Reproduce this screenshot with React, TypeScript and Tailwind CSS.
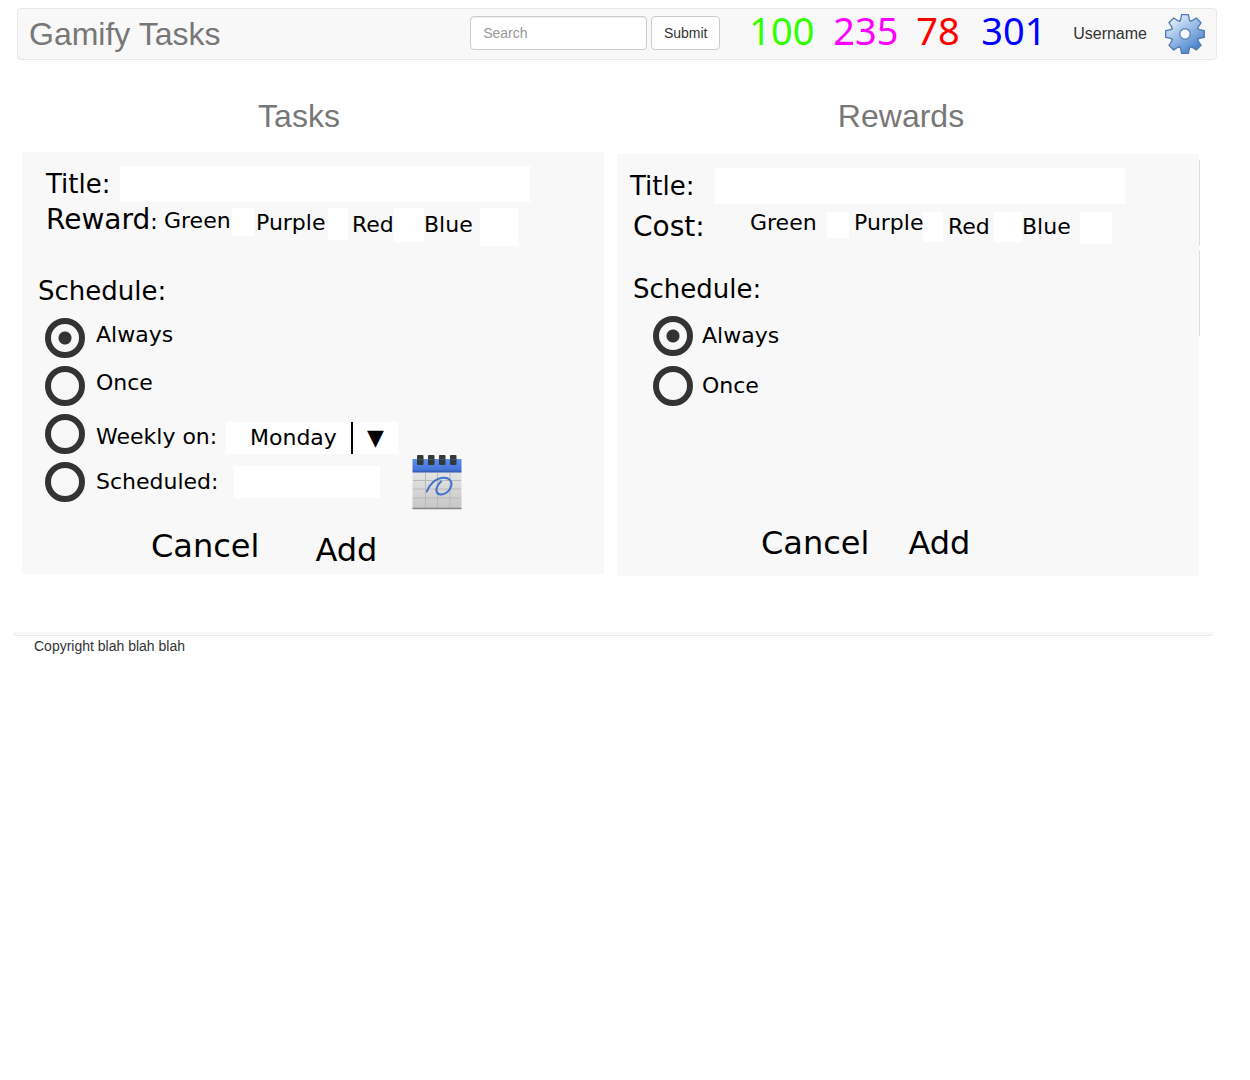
import React from "react";

const SCORES = [
  { name: "Green points", value: 100, style: "w-[84px] text-[#33ff00]" },
  { name: "Purple points", value: 235, style: "w-[83px] text-[#ff00ff]" },
  { name: "Red points", value: 78, style: "w-[65px] text-[#ff0000]" },
  { name: "Blue points", value: 301, style: "w-[92px] text-[#0000ff]" },
];

const TASK_COLORS = [
  { name: "Green", label: "w-[68px] leading-[26px]", box: "w-[22px] h-7 mr-0.5" },
  { name: "Purple", label: "w-[72px] leading-[30px]", box: "w-5 h-8 mr-1" },
  { name: "Red", label: "w-[42px] leading-[34px]", box: "w-[30px] h-[34px]" },
  { name: "Blue", label: "w-14 leading-[34px]", box: "w-[38px] h-[38px]" },
];

const REWARD_COLORS = [
  { name: "Green", label: "w-[77px] leading-[22px]", box: "w-[22px] h-[26px] mr-[5px]" },
  { name: "Purple", label: "w-[69px] leading-[22px]", box: "w-5 h-[30px] mr-[5px]" },
  { name: "Red", label: "w-[46px] leading-[30px]", box: "w-7 h-[30px]" },
  { name: "Blue", label: "w-[58px] leading-[30px]", box: "w-8 h-8" },
];

const DAYS = ["Monday", "Tuesday", "Wednesday", "Thursday", "Friday", "Saturday", "Sunday"];

// Outline of an eight-toothed gear centred on (20, 20).
const GEAR_POINTS = Array.from({ length: 8 }, (_, i) => {
  const a = (i * Math.PI) / 4;
  const corners = [
    [-5.4, 12.6],
    [-4.4, 14.4],
    [-3.4, 19.3],
    [3.4, 19.3],
    [4.4, 14.4],
    [5.4, 12.6],
  ];
  return corners
    .map(([x, y]) => {
      const px = 20 + x * Math.cos(a) + y * Math.sin(a);
      const py = 20 + x * Math.sin(a) - y * Math.cos(a);
      return `${px.toFixed(2)},${py.toFixed(2)}`;
    })
    .join(" ");
}).join(" ");

function GearIcon() {
  return (
    <svg viewBox="0 0 40 40" className="size-10" aria-hidden="true">
      <defs>
        <linearGradient id="gear" x1="0.15" y1="0.1" x2="0.75" y2="0.95">
          <stop offset="0" stopColor="#e3eefa" />
          <stop offset="0.5" stopColor="#94b8e4" />
          <stop offset="1" stopColor="#4580cd" />
        </linearGradient>
      </defs>
      <polygon points={GEAR_POINTS} fill="url(#gear)" stroke="#4f79b0" strokeWidth="1.3" strokeLinejoin="round" />
      <circle cx="20" cy="20" r="5.2" fill="#f8f8f8" stroke="#6088bd" strokeWidth="1.4" />
    </svg>
  );
}

function CalendarIcon() {
  return (
    <svg viewBox="0 0 50 55" className="h-[55px] w-[50px]" aria-hidden="true">
      <defs>
        <linearGradient id="calHead" x1="0" y1="0" x2="0" y2="1">
          <stop offset="0" stopColor="#5b8df0" />
          <stop offset="0.8" stopColor="#4474d6" />
          <stop offset="1" stopColor="#2f55a6" />
        </linearGradient>
        <linearGradient id="calBody" x1="0" y1="0" x2="0" y2="1">
          <stop offset="0" stopColor="#e6e6e6" />
          <stop offset="1" stopColor="#c6c6c6" />
        </linearGradient>
      </defs>
      <rect x="0.5" y="16" width="49" height="38" fill="url(#calBody)" />
      <path d="M13.5 18V53M25.5 18V53M38 18V53M1 25.5H49M1 34H49M1 43H49" stroke="#bababa" strokeWidth="1" fill="none" />
      <path d="M0.5 53.5H49.5" stroke="#858585" strokeWidth="1.6" />
      <rect x="0.5" y="4" width="49" height="13.5" fill="url(#calHead)" />
      <g fill="#333a3a">
        <rect x="5" y="0" width="6.5" height="10" rx="1" />
        <rect x="16" y="0" width="6.5" height="10" rx="1" />
        <rect x="27" y="0" width="6.5" height="10" rx="1" />
        <rect x="38" y="0" width="6.5" height="10" rx="1" />
      </g>
      <path d="M5 4.5h6.5M16 4.5H22.5M27 4.5h6.5M38 4.5h6.5" stroke="#4c5252" strokeWidth="1" />
      <path
        d="M14.8 36.5C17 30 23 23.5 31 22.8C37 22.4 40.5 26 39.2 31C38 36 33 40 28.5 39.5C24 39 23.5 34.5 25.5 31C26.5 29 28 27.5 29 26.5"
        fill="none"
        stroke="#4272cc"
        strokeWidth="2"
        strokeLinecap="round"
      />
    </svg>
  );
}

type ColorField = { name: string; label: string; box: string };

function ColorFields({ prefix, fields }: { prefix: string; fields: ColorField[] }) {
  return (
    <>
      {fields.map((f) => (
        <React.Fragment key={f.name}>
          <label htmlFor={`${prefix}-${f.name}`} className={`shrink-0 text-[22px] ${f.label}`}>
            {f.name}
          </label>
          <input id={`${prefix}-${f.name}`} type="text" className={`shrink-0 bg-white ${f.box}`} />
        </React.Fragment>
      ))}
    </>
  );
}

function Radio({ id, name, checked }: { id: string; name: string; checked?: boolean }) {
  return (
    <input
      type="radio"
      id={id}
      name={name}
      defaultChecked={checked}
      className="size-10 shrink-0 appearance-none rounded-full border-6 border-[#333] checked:bg-[radial-gradient(circle,#333_6px,transparent_7px)]"
    />
  );
}

function TaskForm() {
  return (
    <form className="bg-[#f8f8f8] pt-3.5">
      <div className="flex items-center pr-[74px] pl-6">
        <label htmlFor="task-title" className="w-[74px] shrink-0 text-[26px] leading-9">
          Title:
        </label>
        <input id="task-title" type="text" className="h-9 min-w-0 flex-1 bg-white" />
      </div>
      <div className="mt-1.5 flex items-start pl-6">
        <span className="w-[118px] shrink-0 text-[28px] leading-6">
          Reward<span className="text-[22px]">:</span>
        </span>
        <ColorFields prefix="task" fields={TASK_COLORS} />
      </div>
      <h3 className="mt-[29px] pl-4 text-[26px] leading-8">Schedule:</h3>
      <div className="mt-[11px] flex flex-col gap-2 pl-[23px] text-[22px] leading-[34px]">
        <div className="flex h-10 items-start gap-[11px]">
          <Radio id="task-always" name="task-schedule" checked />
          <label htmlFor="task-always">Always</label>
        </div>
        <div className="flex h-10 items-start gap-[11px]">
          <Radio id="task-once" name="task-schedule" />
          <label htmlFor="task-once">Once</label>
        </div>
        <div className="flex h-10 items-end gap-[11px]">
          <Radio id="task-weekly" name="task-schedule" />
          <div className="flex items-end">
            <label htmlFor="task-weekly" className="w-[130px] shrink-0">
              Weekly on:
            </label>
            <div className="relative h-8 w-[172px] bg-white leading-8">
              <select aria-label="Day of the week" className="h-8 w-full appearance-none bg-transparent pl-6 leading-8">
                {DAYS.map((d) => (
                  <option key={d}>{d}</option>
                ))}
              </select>
              <span className="pointer-events-none absolute inset-y-0 right-0 w-[47px] border-l-2 border-black text-center">▼</span>
            </div>
          </div>
        </div>
        <div className="flex h-10 items-center gap-[11px]">
          <Radio id="task-scheduled" name="task-schedule" />
          <div className="flex items-center">
            <label htmlFor="task-scheduled" className="w-[138px] shrink-0">
              Scheduled:
            </label>
            <input aria-label="Scheduled date" type="text" className="h-8 w-[146px] bg-white" />
            <button type="button" aria-label="Pick a date" className="-my-2 ml-8 shrink-0">
              <CalendarIcon />
            </button>
          </div>
        </div>
      </div>
      <div className="mt-6 flex items-start gap-14 pl-[129px] text-[32px]">
        <button type="button" className="leading-10">
          Cancel
        </button>
        <button type="submit" className="leading-12">
          Add
        </button>
      </div>
    </form>
  );
}

function RewardForm() {
  return (
    <form className="min-w-0 flex-1 bg-[#f8f8f8] pt-3.5 pb-[13px]">
      <div className="flex items-center pr-[74px] pl-[13px]">
        <label htmlFor="reward-title" className="w-[85px] shrink-0 text-[26px] leading-9">
          Title:
        </label>
        <input id="reward-title" type="text" className="h-9 min-w-0 flex-1 bg-white" />
      </div>
      <div className="mt-2 flex items-start pl-4">
        <span className="w-[117px] shrink-0 text-[28px] leading-[30px]">Cost:</span>
        <ColorFields prefix="reward" fields={REWARD_COLORS} />
      </div>
      <h3 className="mt-[29px] pl-4 text-[26px] leading-8">Schedule:</h3>
      <div className="mt-[11px] flex flex-col gap-2.5 pl-9 text-[22px] leading-8">
        <div className="flex items-center gap-[9px]">
          <Radio id="reward-always" name="reward-schedule" checked />
          <label htmlFor="reward-always">Always</label>
        </div>
        <div className="flex items-center gap-[9px]">
          <Radio id="reward-once" name="reward-schedule" />
          <label htmlFor="reward-once">Once</label>
        </div>
      </div>
      <div className="mt-[117px] flex items-start gap-[39px] pl-36 text-[32px] leading-10">
        <button type="button">Cancel</button>
        <button type="submit">Add</button>
      </div>
    </form>
  );
}

export default function App() {
  return (
    <div className="min-h-screen bg-white pt-2 font-['Liberation_Sans',Arial,sans-serif] text-[#333]">
      <header className="mr-[33px] ml-[17px] flex h-[52px] items-center rounded border border-[#e7e7e7] bg-[#f8f8f8] pr-[11px] pl-[11px]">
        <h1 className="flex-1 text-[32px] leading-10 whitespace-nowrap text-[#777]">Gamify Tasks</h1>
        <form className="mr-[29px] flex gap-1 pb-0.5 text-sm" role="search">
          <input
            type="text"
            aria-label="Search"
            placeholder="Search"
            className="h-[34px] w-[177px] rounded border border-[#ccc] bg-white px-3 shadow-[inset_0_1px_1px_rgba(0,0,0,0.075)] placeholder:text-[#999]"
          />
          <button type="submit" className="h-[34px] w-[69px] rounded border border-[#ccc] bg-white">
            Submit
          </button>
        </form>
        <ul className="flex pb-2 font-['Noto_Sans',sans-serif] text-[38px] leading-10">
          {SCORES.map((s) => (
            <li key={s.name} title={s.name} className={s.style}>
              {s.value}
            </li>
          ))}
        </ul>
        <a href="#profile" className="mr-[18px] text-base">
          Username
        </a>
        <button type="button" aria-label="Settings">
          <GearIcon />
        </button>
      </header>

      <main className="mt-9 mr-[51px] ml-[22px] flex gap-[13px]">
        <section className="min-w-0 flex-1">
          <h2 className="mb-4 pr-7 text-center text-[32px] leading-10 text-[#777]">Tasks</h2>
          <div className="font-['DejaVu_Sans',sans-serif] text-black">
            <TaskForm />
          </div>
        </section>
        <section className="min-w-0 flex-1">
          <h2 className="mb-[18px] pr-3.5 text-center text-[32px] leading-10 text-[#777]">Rewards</h2>
          <div className="-mr-px flex font-['DejaVu_Sans',sans-serif] text-black">
            <RewardForm />
            <div className="flex w-px flex-col gap-1 pt-1.5">
              <div className="h-[86px] bg-[#ddd]" />
              <div className="h-[86px] bg-[#ddd]" />
            </div>
          </div>
        </section>
      </main>

      <footer className="mt-14 mr-[37px] ml-[13px]">
        <div className="h-1 rounded-b border-b border-[#e7e7e7] bg-[#f8f8f8]" />
        <p className="pl-[21px] text-sm">Copyright blah blah blah</p>
      </footer>
    </div>
  );
}
